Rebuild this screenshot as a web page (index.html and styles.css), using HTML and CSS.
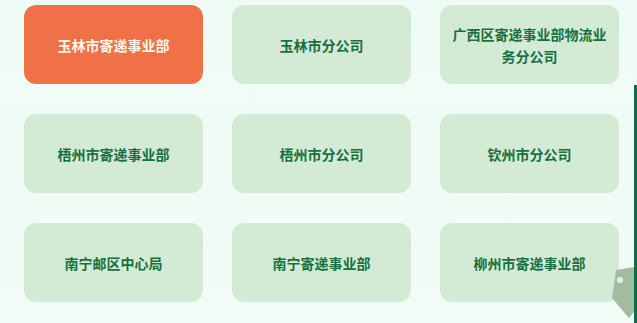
FILE: index.html
```html
<!DOCTYPE html>
<html lang="zh-CN">
<head>
    <meta charset="UTF-8">
    <title>分支机构</title>
    <link rel="stylesheet" href="styles.css">
</head>
<body>
<div class="page">
    <div class="org-grid">
        <div class="org-item active">玉林市寄递事业部</div>
        <div class="org-item">玉林市分公司</div>
        <div class="org-item">广西区寄递事业部物流业务分公司</div>
        <div class="org-item">梧州市寄递事业部</div>
        <div class="org-item">梧州市分公司</div>
        <div class="org-item">钦州市分公司</div>
        <div class="org-item">南宁邮区中心局</div>
        <div class="org-item">南宁寄递事业部</div>
        <div class="org-item">柳州市寄递事业部</div>
    </div>
    <div class="side-line"></div>
    <svg class="deco" width="24" height="60" viewBox="0 0 24 60">
        <polygon points="6,8 24,5 24,50 19,56 2,36" fill="#a3bb9f"/>
        <circle cx="10" cy="18" r="3" fill="#e3eee1"/>
    </svg>
</div>
</body>
</html>
```

FILE: styles.css
```css
body {
    margin: 0;
    background: #effbf5;
    font-family: "Noto Sans CJK SC", "Noto Sans", sans-serif;
}

.page {
    position: relative;
    width: 637px;
    height: 323px;
    overflow: hidden;
    background: linear-gradient(180deg, #effcf6 0%, #f2fbf5 100%);
}

.org-grid {
    display: grid;
    grid-template-columns: repeat(3, 179px);
    grid-auto-rows: 79px;
    column-gap: 29px;
    row-gap: 30px;
    padding: 5px 0 0 24px;
}

.org-item {
    display: flex;
    align-items: center;
    justify-content: center;
    padding: 0 10px;
    border-radius: 12px;
    background: #d3ebd4;
    color: #17703f;
    font-size: 14px;
    font-weight: 700;
    line-height: 22px;
    text-align: center;
}

.org-item.active {
    background: #f07048;
    color: #fff6ea;
}

.side-line {
    position: absolute;
    right: 0;
    top: 85px;
    bottom: 0;
    width: 3px;
    background: #0e6a48;
}

.deco {
    position: absolute;
    right: 3px;
    top: 262px;
}
```
